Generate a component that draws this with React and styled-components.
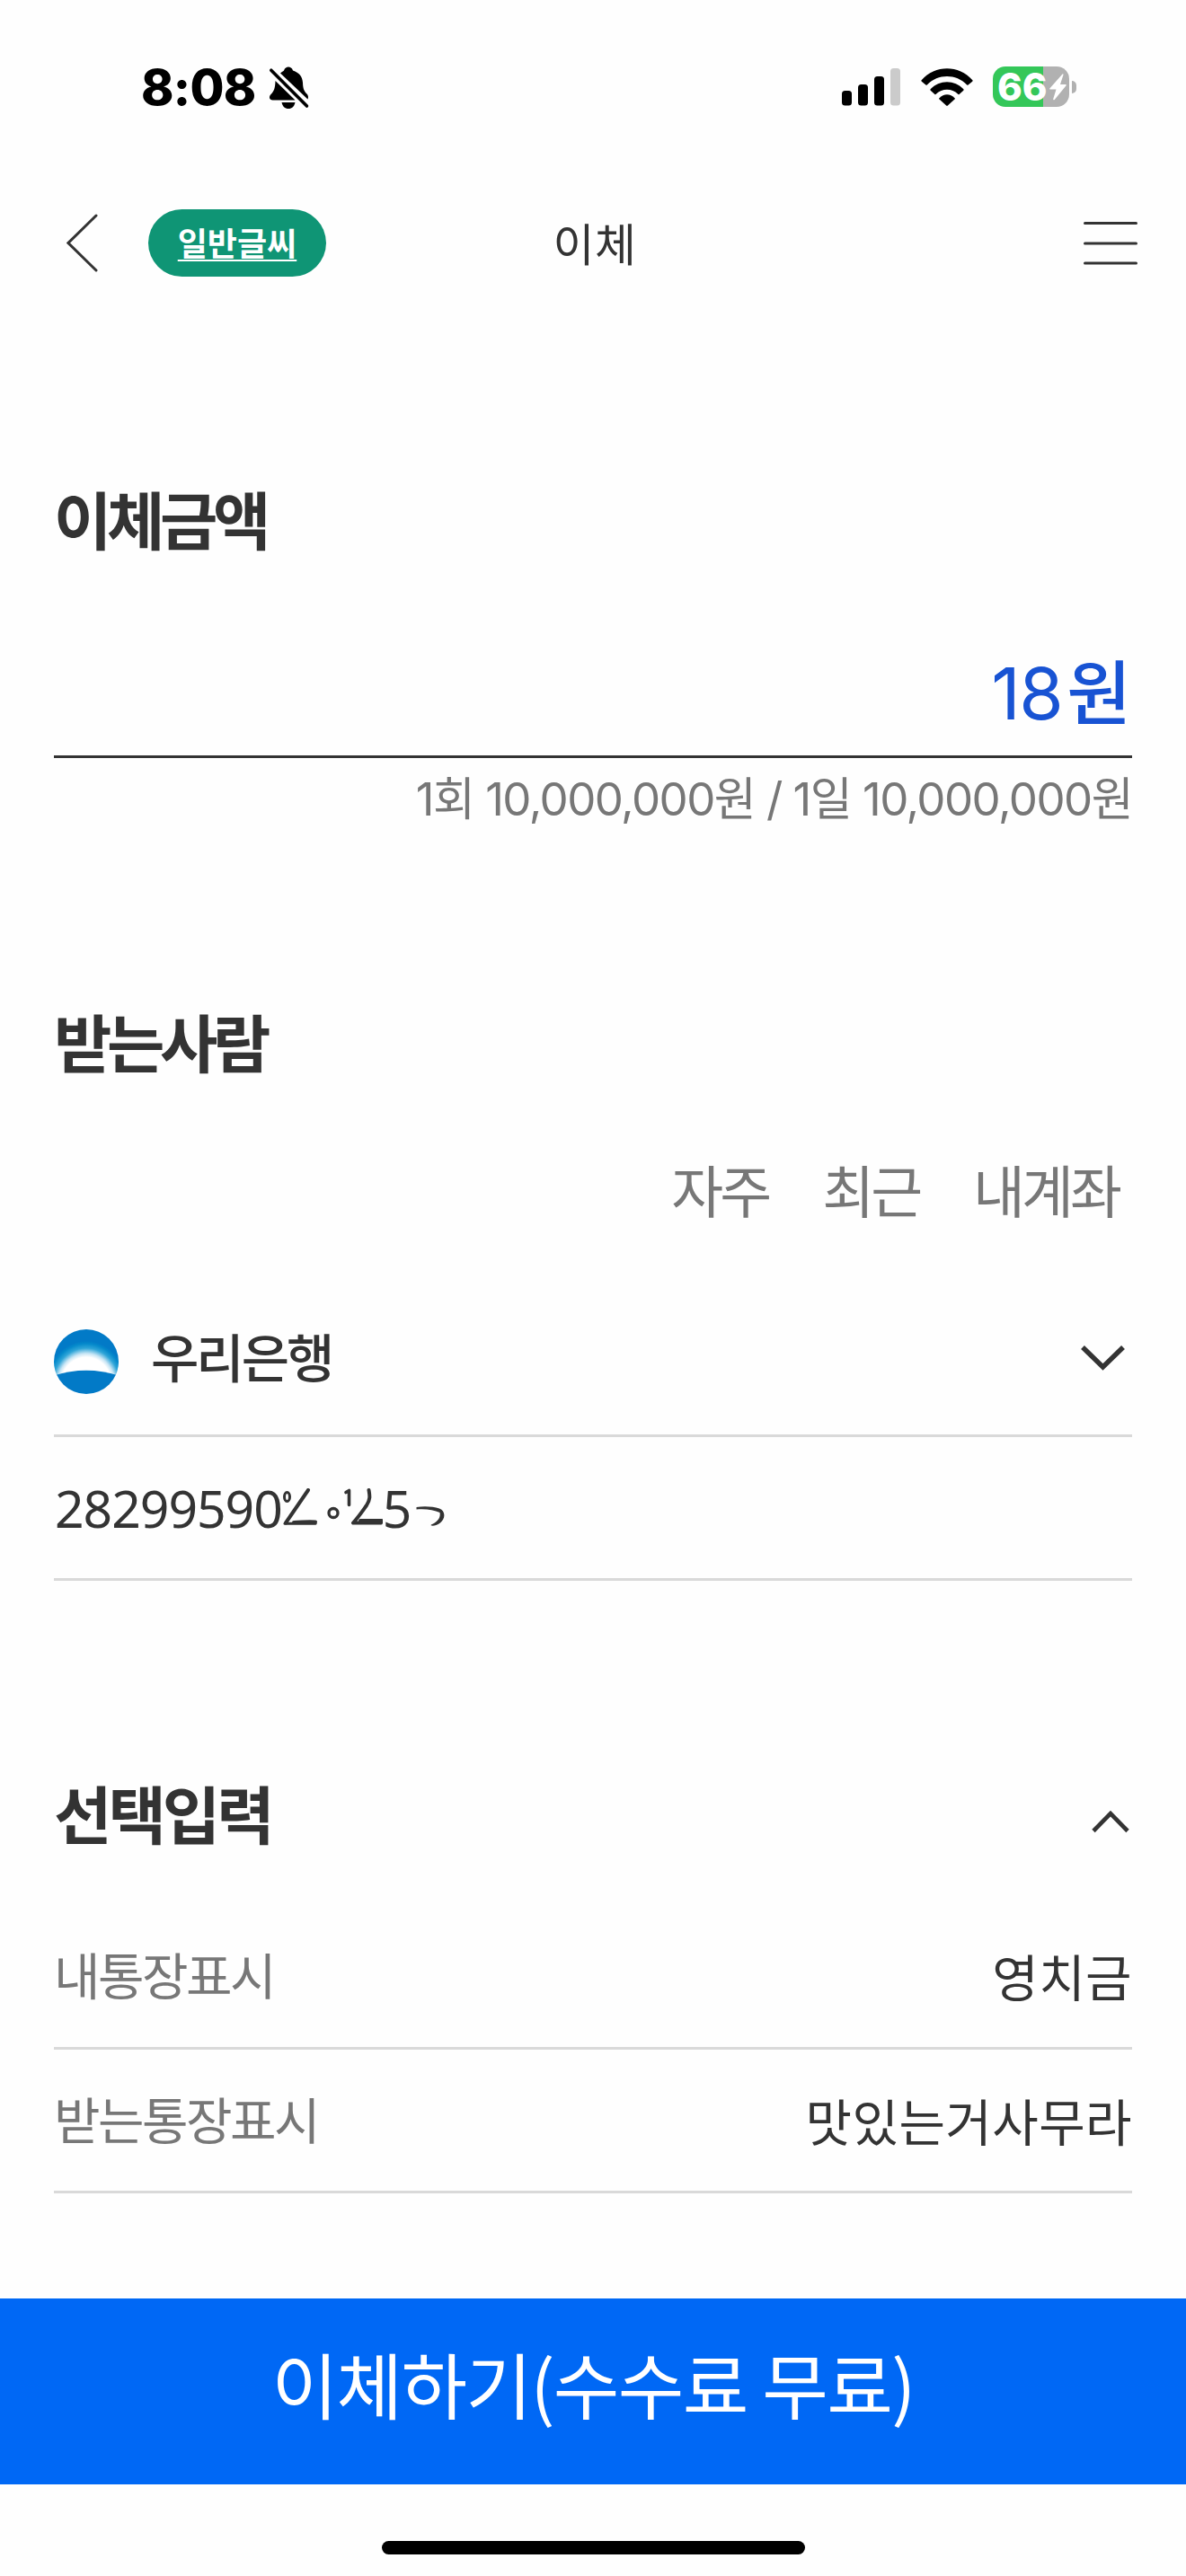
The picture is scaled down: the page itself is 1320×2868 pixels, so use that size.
import styled, { createGlobalStyle } from 'styled-components';

const options = [
  { label: '내통장표시', value: '영치금' },
  { label: '받는통장표시', value: '맛있는거사무라' },
];

const tabs = ['자주', '최근', '내계좌'];

export default function App() {
  return (
    <Page>
      <GlobalStyle />
      <StatusBar>
        <Time>8:08</Time>
        <BellOff />
        <StatusIcons>
          <Signal />
          <Wifi />
          <Battery />
        </StatusIcons>
      </StatusBar>

      <Header>
        <HeaderSide>
          <BackIcon />
          <FontButton>일반글씨</FontButton>
        </HeaderSide>
        <Title>이체</Title>
        <HeaderSide $end>
          <MenuIcon />
        </HeaderSide>
      </Header>

      <Section $top={179}>
        <Heading>이체금액</Heading>
        <AmountRow>
          <Amount>18</Amount>
          <Won>원</Won>
        </AmountRow>
        <Limit>1회 10,000,000원 / 1일 10,000,000원</Limit>
      </Section>

      <Section $top={181}>
        <Heading>받는사람</Heading>
        <Tabs>
          {tabs.map((t) => <Tab key={t}>{t}</Tab>)}
        </Tabs>
        <BankRow>
          <BankLogo />
          <BankName>우리은행</BankName>
          <ChevronDown />
        </BankRow>
        <AccountRow>
          <span>28299590</span>
          <ScribbleLeft />
          <span>5</span>
          <ScribbleRight />
        </AccountRow>
      </Section>

      <Section $top={208}>
        <HeadingRow>
          <Heading $wide>선택입력</Heading>
          <ChevronUp />
        </HeadingRow>
        <OptionList>
          {options.map((o) => (
            <OptionRow key={o.label}>
              <Label>{o.label}</Label>
              <Value>{o.value}</Value>
            </OptionRow>
          ))}
        </OptionList>
      </Section>

      <SubmitButton>이체하기(수수료 무료)</SubmitButton>
      <HomeArea>
        <HomeBar />
      </HomeArea>
    </Page>
  );
}

function BellOff() {
  return (
    <Bell width="46" height="50" viewBox="0 0 46 50">
      <path d="M13 7.500C14.800 6 16 5.500 17 4.500C18 1.500 20 0.500 22 0.500S26 1.500 27 4.500C34 7 37.500 11 38 18C38.200 25 39.500 27.500 42.500 30.500C44 32 44.500 34 43.500 36.500Z" />
      <path d="M7.500 16L29.500 37.500H4.500C0.500 37.500 0 33.500 2.500 31C6 27.500 7.300 24 7.500 16Z" />
      <path d="M14.500 40H29.500C28.500 44.500 26 47 22 47S15.500 44.500 14.500 40Z" />
      <path d="M2.800 4.200L42.500 44" stroke="#000" strokeWidth="3.600" strokeLinecap="round" />
    </Bell>
  );
}

function Signal() {
  return (
    <svg width="66" height="42" viewBox="0 0 66 42">
      <rect x="0" y="25" width="11" height="16.500" rx="3.500" />
      <rect x="18" y="18" width="11" height="23.500" rx="3.500" />
      <rect x="36" y="9" width="11" height="32.500" rx="3.500" />
      <rect x="54" y="0" width="11" height="41.500" rx="3.500" fill="#cbcbcb" />
    </svg>
  );
}

function Wifi() {
  return (
    <svg width="58" height="42" viewBox="0 0 58 42">
      <path d="M0.600 13.200C16 -4 42 -4 57.400 13.200C57.800 13.800 57.600 14.300 57.200 14.700L52.600 18.600C52.100 19 51.600 18.900 51.200 18.400C39 5.800 19 5.800 6.800 18.400C6.400 18.900 5.900 19 5.400 18.600L0.800 14.700C0.400 14.300 0.200 13.800 0.600 13.200Z" />
      <path d="M10.600 23.300C20.500 12.500 37.500 12.500 47.400 23.300C47.800 23.800 47.700 24.300 47.300 24.700L42.600 28.900C42.100 29.300 41.600 29.200 41.200 28.800C34.500 22.100 23.500 22.100 16.800 28.800C16.400 29.200 15.900 29.300 15.400 28.900L10.700 24.700C10.300 24.300 10.200 23.800 10.600 23.300Z" />
      <path d="M20.400 33.200C25.300 28 32.700 28 37.600 33.200C38 33.700 38 34 37.500 34.500L29.800 41.500C29.200 42 28.800 42 28.200 41.500L20.500 34.500C20 34 20 33.700 20.400 33.200Z" />
    </svg>
  );
}

function Battery() {
  return (
    <BatteryWrap>
      <BatteryBody>
        <span>66</span>
        <svg width="19" height="30" viewBox="0 0 19 30">
          <path d="M14.500 0.500L0.500 16.300C0 17 0.300 17.500 1 17.500H7.500L4.200 28.200C3.900 29.400 5 29.700 5.700 28.900L18.600 13.300C19 12.600 18.700 12.100 18 12.100H12L15.500 1.300C15.700 0.200 15 -0.100 14.500 0.500Z" fill="#fff" />
        </svg>
      </BatteryBody>
      <BatteryTip />
    </BatteryWrap>
  );
}

function BackIcon() {
  return (
    <svg width="36" height="66" viewBox="0 0 36 66" fill="none" stroke="#333" strokeWidth="3">
      <path d="M33 2L2 32.500L33 63" strokeLinecap="round" />
    </svg>
  );
}

function MenuIcon() {
  return (
    <svg width="60" height="50" viewBox="0 0 60 50" fill="none" stroke="#333" strokeWidth="3">
      <path d="M1.500 2.500H58.500M1.500 25H58.500M1.500 47H58.500" strokeLinecap="round" />
    </svg>
  );
}

function BankLogo() {
  return (
    <Logo width="72" height="72" viewBox="0 0 72 72">
      <defs>
        <clipPath id="disc"><circle cx="36" cy="36" r="36" /></clipPath>
        <radialGradient id="glow" gradientUnits="userSpaceOnUse" cx="36" cy="63" r="50" gradientTransform="translate(36 0) scale(0.900 1) translate(-36 0)">
          <stop offset="0.640" stopColor="#fff" />
          <stop offset="0.720" stopColor="#c9e6f5" />
          <stop offset="0.840" stopColor="#2fa5d8" />
          <stop offset="0.940" stopColor="#0489cb" />
          <stop offset="1" stopColor="#027ac7" />
        </radialGradient>
      </defs>
      <g clipPath="url(#disc)">
        <rect width="72" height="72" fill="url(#glow)" />
        <path d="M0 51.500Q36 40 72 51.500V72H0Z" fill="#027ac7" />
      </g>
    </Logo>
  );
}

function ChevronDown() {
  return (
    <DownIcon width="52" height="32" viewBox="0 0 52 32" fill="none" stroke="#333" strokeWidth="5.500">
      <path d="M4 4L26.500 26L49 4" />
    </DownIcon>
  );
}

function ChevronUp() {
  return (
    <UpIcon width="44" height="28" viewBox="0 0 44 28" fill="none" stroke="#333" strokeWidth="4.700">
      <path d="M3 24.500L22 5L41 24.500" />
    </UpIcon>
  );
}

// half erased digits of the account number
function ScribbleLeft() {
  return (
    <svg width="112" height="44" viewBox="0 0 112 44" fill="none" stroke="#333" strokeWidth="4" strokeLinecap="round" strokeLinejoin="round">
      <ellipse cx="5.500" cy="9.500" rx="3" ry="5" strokeWidth="3" />
      <path d="M29 2L4 38.500M13 38C22 38 28 36.500 37 37.500" />
      <path d="M3 39.300H37" strokeWidth="3" />
      <circle cx="57" cy="27.500" r="5" strokeWidth="3.300" />
      <path d="M71 4.500L74.500 2.500V18.500" strokeWidth="3.600" />
      <path d="M96.500 2C97.500 8 98.500 12 94 19C89 26 85 32 79 38.500H110L111 36H87" />
    </svg>
  );
}

function ScribbleRight() {
  return (
    <Hook width="34" height="24" viewBox="0 0 34 24">
      <path d="M0.500 1C9 -0.500 19 0.200 26 2.500C33 5 33 14 27 18.500C23 21.500 19 22 17 21.500C16 21 17 20.200 19 19.500C25 16.500 27.500 12 26.500 7C20 4 10 2.500 0.500 3.500Z" fill="#333" />
    </Hook>
  );
}

const GlobalStyle = createGlobalStyle`
  body {
    margin: 0;
    background: #fff;
  }
`;

const Page = styled.div`
  width: 1320px;
  height: 2868px;
  display: flex;
  flex-direction: column;
  background: #fefefe;
  color: #333;
  font-family: "Noto Sans CJK KR", sans-serif;
  overflow: hidden;
  svg {
    flex-shrink: 0;
    display: block;
  }
`;

const StatusBar = styled.div`
  height: 193px;
  padding: 0 122px 0 157px;
  display: flex;
  align-items: center;
`;

const Time = styled.div`
  width: 142px;
  font-family: Inter, sans-serif;
  font-size: 55px;
  font-weight: 800;
  line-height: 60px;
  letter-spacing: -0.7px;
  white-space: nowrap;
  color: #000;
`;

const Bell = styled.svg`
  margin-top: 4px;
`;

const StatusIcons = styled.div`
  margin-left: auto;
  display: flex;
  align-items: center;
  gap: 22px;
`;

const BatteryWrap = styled.div`
  display: flex;
  align-items: center;
  gap: 3px;
`;

const BatteryBody = styled.div`
  width: 85px;
  height: 45px;
  padding-left: 5px;
  box-sizing: border-box;
  border-radius: 14px;
  display: flex;
  align-items: center;
  background: linear-gradient(to right, #34c759 56px, #b1b1b1 56px);
  span {
    width: 58px;
    font-family: Inter, sans-serif;
    font-size: 42px;
    font-weight: 800;
    line-height: 45px;
    color: #fff;
  }
`;

const BatteryTip = styled.div`
  width: 5px;
  height: 14px;
  border-radius: 0 6px 6px 0;
  background: #b1b1b1;
`;

const Header = styled.header`
  height: 155px;
  padding: 0 54px 0 74px;
  display: flex;
  align-items: center;
`;

const HeaderSide = styled.div`
  flex: 1;
  display: flex;
  align-items: center;
  justify-content: ${(p) => (p.$end ? 'flex-end' : 'flex-start')};
  gap: 55px;
`;

const FontButton = styled.button`
  width: 198px;
  height: 75px;
  padding: 0 0 3px;
  border: none;
  border-radius: 38px;
  background: #0f9575;
  color: #fff;
  font-family: inherit;
  font-size: 36px;
  font-weight: 700;
  line-height: 50px;
  text-decoration: underline;
  text-decoration-thickness: 2px;
  text-underline-offset: 4px;
`;

const Title = styled.h1`
  margin: 0 16px 3px 0;
  font-size: 50px;
  font-weight: 400;
  line-height: 60px;
  letter-spacing: 0.6px;
`;

const Section = styled.section`
  margin: ${(p) => p.$top}px 60px 0;
  display: flex;
  flex-direction: column;
`;

const Heading = styled.h2`
  margin: 0;
  font-size: 70px;
  font-weight: 700;
  line-height: 100px;
  letter-spacing: ${(p) => (p.$wide ? '-4px' : '-5.4px')};
`;

const HeadingRow = styled.div`
  display: flex;
  justify-content: space-between;
  align-items: center;
`;

const AmountRow = styled.div`
  height: 151px;
  margin-top: 63px;
  padding-right: 1px;
  border-bottom: 3px solid #333;
  display: flex;
  justify-content: flex-end;
  align-items: baseline;
  gap: 5px;
  color: #1853d3;
  line-height: 154px;
`;

const Amount = styled.span`
  font-family: Inter, sans-serif;
  font-size: 80px;
  letter-spacing: -1.5px;
`;

const Won = styled.span`
  font-size: 78px;
  font-weight: 500;
`;

const Limit = styled.div`
  height: 84px;
  font-family: Inter, "Noto Sans CJK KR", sans-serif;
  font-size: 51px;
  line-height: 92px;
  letter-spacing: -1.55px;
  text-align: right;
  color: #777;
`;

const Tabs = styled.div`
  height: 120px;
  margin-top: 54px;
  padding-right: 15px;
  display: flex;
  justify-content: flex-end;
  align-items: center;
  gap: 60px;
`;

const Tab = styled.span`
  font-size: 63px;
  line-height: 90px;
  letter-spacing: -4px;
  color: #777;
`;

const BankRow = styled.div`
  height: 160px;
  margin-top: 54px;
  border-bottom: 3px solid #d9d9d9;
  display: flex;
  align-items: center;
`;

const Logo = styled.svg`
  margin-bottom: 2px;
`;

const BankName = styled.span`
  flex: 1;
  margin: 0 0 16px 36px;
  font-size: 58px;
  font-weight: 500;
  line-height: 80px;
  letter-spacing: -3px;
`;

const DownIcon = styled.svg`
  margin: 0 7px 10px 0;
`;

const UpIcon = styled.svg`
  margin: 20px 2px 0 0;
`;

const AccountRow = styled.div`
  height: 157px;
  padding-left: 1px;
  border-bottom: 3px solid #d9d9d9;
  display: flex;
  align-items: center;
  font-family: "Noto Sans", sans-serif;
  font-size: 57px;
  line-height: 80px;
  letter-spacing: -1px;
`;

const Hook = styled.svg`
  margin: 20px 0 0 6px;
`;

const OptionList = styled.div`
  margin-top: 53px;
  display: flex;
  flex-direction: column;
`;

const OptionRow = styled.div`
  height: 157.5px;
  border-bottom: 3px solid #d9d9d9;
  display: flex;
  justify-content: space-between;
  align-items: center;
  font-size: 56px;
  line-height: 80px;
`;

const Label = styled.span`
  padding-bottom: 5px;
  letter-spacing: -2.5px;
  color: #777;
`;

const Value = styled.span`
  padding-bottom: 1px;
  letter-spacing: 0.4px;
`;

const SubmitButton = styled.button`
  height: 207px;
  margin-top: 117px;
  padding: 0 0 22px;
  border: none;
  background: #0068f5;
  color: #fff;
  font-family: inherit;
  font-size: 80px;
  font-weight: 400;
  line-height: 110px;
  letter-spacing: -1.6px;
`;

const HomeArea = styled.div`
  height: 102px;
  display: flex;
  justify-content: center;
  align-items: flex-end;
`;

const HomeBar = styled.div`
  width: 471px;
  height: 15px;
  margin-bottom: 24px;
  border-radius: 8px;
  background: #000;
`;
